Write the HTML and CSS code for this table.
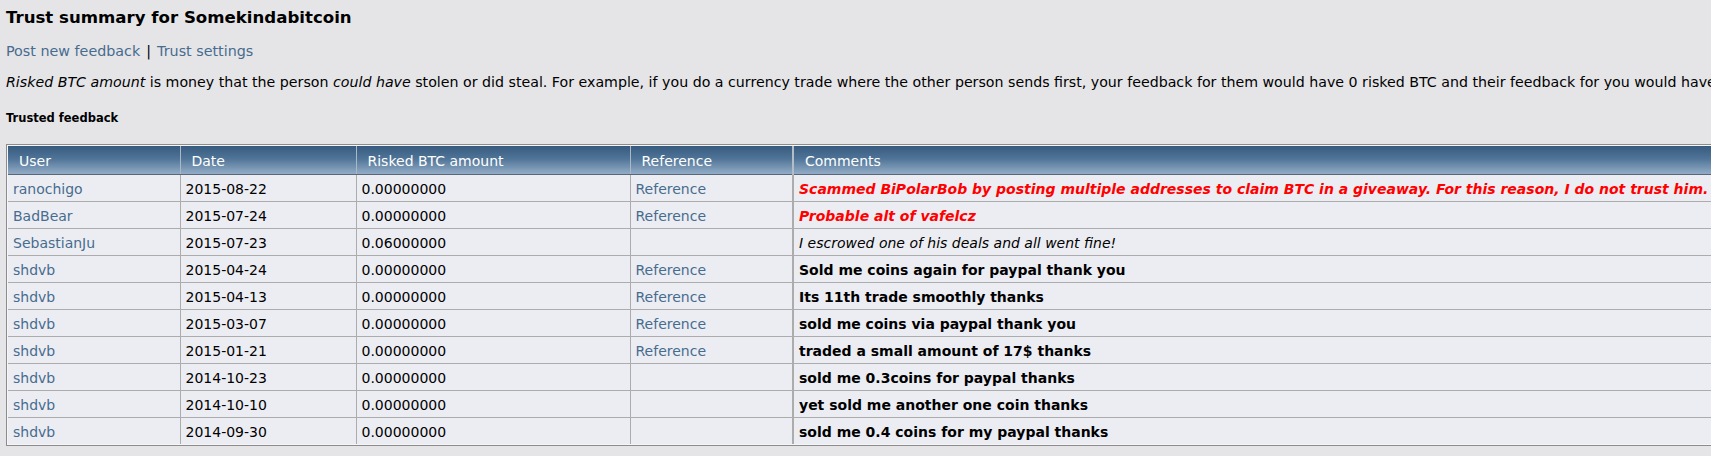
FILE: index.html
```html
<!DOCTYPE html>
<html lang="en">
<head>
<meta charset="utf-8">
<title>Trust summary for Somekindabitcoin</title>
<link rel="stylesheet" href="styles.css">
</head>
<body>
<div class="page">
  <h1 class="title">Trust summary for Somekindabitcoin</h1>
  <p class="links"><a href="#">Post new feedback</a><span class="sep">|</span><a href="#">Trust settings</a></p>
  <p class="intro"><em>Risked BTC amount</em> is money that the person <em>could have</em> stolen or did steal. For example, if you do a currency trade where the other person sends first, your feedback for them would have 0 risked BTC and their feedback for you would have risked BTC equal to the amount of the trade.</p>
  <h2 class="section">Trusted feedback</h2>
  <div class="frame">
    <table class="feedback">
      <colgroup>
        <col class="c-user">
        <col class="c-date">
        <col class="c-risk">
        <col class="c-ref">
        <col class="c-comm">
      </colgroup>
      <thead>
        <tr>
          <th>User</th>
          <th>Date</th>
          <th>Risked BTC amount</th>
          <th>Reference</th>
          <th class="comm">Comments</th>
        </tr>
      </thead>
      <tbody>
        <tr>
          <td><a href="#">ranochigo</a></td>
          <td>2015-08-22</td>
          <td>0.00000000</td>
          <td><a href="#">Reference</a></td>
          <td class="comm neg">Scammed BiPolarBob by posting multiple addresses to claim BTC in a giveaway. For this reason, I do not trust him.</td>
        </tr>
        <tr>
          <td><a href="#">BadBear</a></td>
          <td>2015-07-24</td>
          <td>0.00000000</td>
          <td><a href="#">Reference</a></td>
          <td class="comm neg">Probable alt of vafelcz</td>
        </tr>
        <tr>
          <td><a href="#">SebastianJu</a></td>
          <td>2015-07-23</td>
          <td>0.06000000</td>
          <td></td>
          <td class="comm neutral">I escrowed one of his deals and all went fine!</td>
        </tr>
        <tr>
          <td><a href="#">shdvb</a></td>
          <td>2015-04-24</td>
          <td>0.00000000</td>
          <td><a href="#">Reference</a></td>
          <td class="comm pos">Sold me coins again for paypal thank you</td>
        </tr>
        <tr>
          <td><a href="#">shdvb</a></td>
          <td>2015-04-13</td>
          <td>0.00000000</td>
          <td><a href="#">Reference</a></td>
          <td class="comm pos">Its 11th trade smoothly thanks</td>
        </tr>
        <tr>
          <td><a href="#">shdvb</a></td>
          <td>2015-03-07</td>
          <td>0.00000000</td>
          <td><a href="#">Reference</a></td>
          <td class="comm pos">sold me coins via paypal thank you</td>
        </tr>
        <tr>
          <td><a href="#">shdvb</a></td>
          <td>2015-01-21</td>
          <td>0.00000000</td>
          <td><a href="#">Reference</a></td>
          <td class="comm pos">traded a small amount of 17$ thanks</td>
        </tr>
        <tr>
          <td><a href="#">shdvb</a></td>
          <td>2014-10-23</td>
          <td>0.00000000</td>
          <td></td>
          <td class="comm pos">sold me 0.3coins for paypal thanks</td>
        </tr>
        <tr>
          <td><a href="#">shdvb</a></td>
          <td>2014-10-10</td>
          <td>0.00000000</td>
          <td></td>
          <td class="comm pos">yet sold me another one coin thanks</td>
        </tr>
        <tr>
          <td><a href="#">shdvb</a></td>
          <td>2014-09-30</td>
          <td>0.00000000</td>
          <td></td>
          <td class="comm pos">sold me 0.4 coins for my paypal thanks</td>
        </tr>
      </tbody>
    </table>
  </div>
</div>
</body>
</html>
```
FILE: styles.css
```css
html, body {
  margin: 0;
  padding: 0;
  background: #e5e5e8;
}

body {
  font-family: "DejaVu Sans", Verdana, sans-serif;
  font-size: 14px;
  color: #000;
}

.page {
  padding: 0 6px 12px;
  width: 1800px;
}

a {
  color: #476c8e;
  text-decoration: none;
}

.title {
  margin: 8px 0 0;
  font-size: 16.6px;
  line-height: 20px;
  font-weight: bold;
}

.links {
  margin: 15px 0 0;
  font-size: 14.3px;
  line-height: 17px;
}

.sep {
  margin: 0 6px;
}

.intro {
  margin: 14px 0 0;
  font-size: 14.2px;
  line-height: 17px;
  white-space: nowrap;
}

.section {
  margin: 20px 0 0;
  font-size: 11.5px;
  line-height: 14px;
  font-weight: bold;
}

.frame {
  margin-top: 19px;
  border: 1px solid #8c8c8c;
  padding: 1px;
  background: #f6f6f8;
}

.feedback {
  width: 100%;
  border-collapse: collapse;
  table-layout: fixed;
  background: #ecedf3;
}

.c-user { width: 172px; }
.c-date { width: 176px; }
.c-risk { width: 274px; }
.c-ref { width: 163px; }

.feedback th {
  text-align: left;
  font-weight: normal;
  color: #fff;
  line-height: 16px;
  padding: 7px 11px 5px;
  background: linear-gradient(to bottom, #365b7f 0%, #4f7497 45%, #93acc6 100%);
  border-left: 1px solid #aeb8c4;
  border-bottom: 1px solid #586878;
  white-space: nowrap;
}

.feedback th:first-child {
  border-left: none;
}

.feedback td {
  line-height: 16px;
  padding: 6px 5px 4px;
  border: 1px solid #acacac;
  white-space: nowrap;
  overflow: hidden;
}

.feedback td:first-child {
  border-left: none;
}

.feedback .comm {
  border-left: 2px solid #acacac;
}

.feedback th.comm {
  border-left: 2px solid #b4bcc6;
}

.feedback tbody tr:first-child td {
  border-top: none;
}

.feedback tbody tr:last-child td {
  border-bottom: none;
}

.feedback td.comm {
  font-weight: bold;
}

.feedback td.neg {
  color: #ff0000;
  font-style: italic;
}

.feedback td.neutral {
  font-weight: normal;
  font-style: italic;
}
```
